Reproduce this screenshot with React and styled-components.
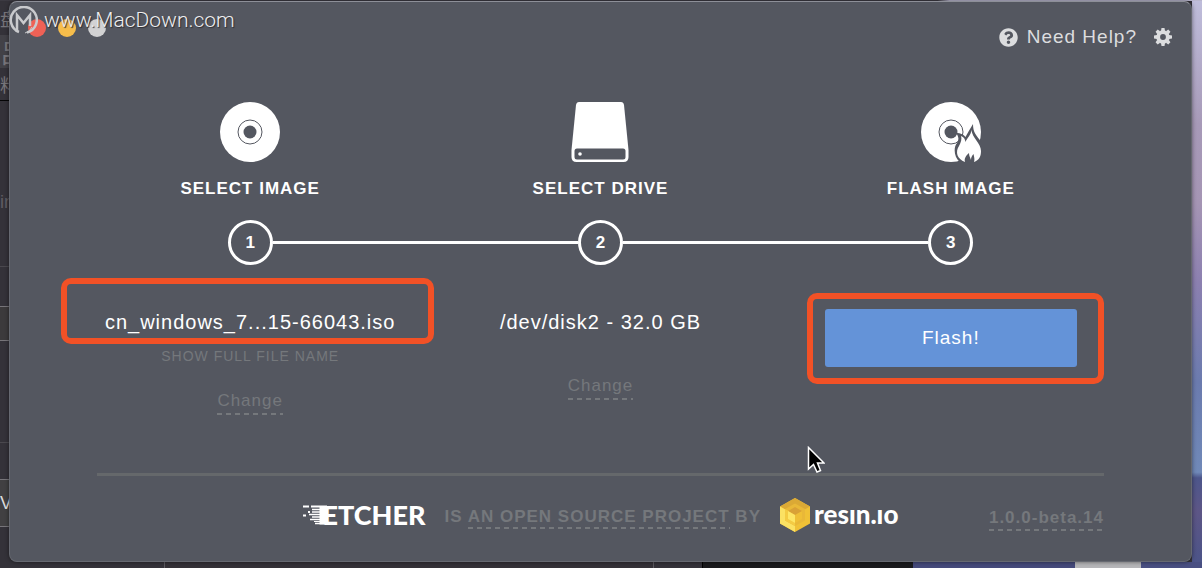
import React from 'react';
import styled, { createGlobalStyle } from 'styled-components';
import { FaQuestionCircle } from 'react-icons/fa';

const SLATE = '#545760';
const MUTED = '#75787c';
const ORANGE = '#f25126';

const GlobalStyle = createGlobalStyle`
  * {
    box-sizing: border-box;
  }
  body {
    margin: 0;
    background: #343239;
    font-family: "Liberation Sans", Arial, sans-serif;
    letter-spacing: 1px;
  }
  button {
    padding: 0;
    border: 0;
    background: none;
    color: inherit;
    font: inherit;
    letter-spacing: inherit;
    cursor: pointer;
  }
  a {
    color: inherit;
    text-decoration: none;
  }
  svg {
    display: block;
  }
`;

const Desktop = styled.div`
  display: grid;
  grid-template-columns: 9px minmax(0, 1fr) 10px;
  grid-template-rows: 1px minmax(0, 1fr) 6px;
  min-height: 100vh;
`;

const TopEdge = styled.div`
  grid-column: 1 / -1;
  background: linear-gradient(90deg, #3c3a42 78%, #b9b6ce 79%);
`;

const Behind = styled.div`
  display: flex;
  flex-direction: column;
  overflow: hidden;
  letter-spacing: 0;
  background: #343239;
`;

const BehindRow = styled.div`
  display: flex;
  align-items: center;
  flex: none;
  height: ${props => props.height}px;
  border-bottom: 1px solid ${props => props.line || 'transparent'};
  background: ${props => props.fill || 'transparent'};
  color: ${props => props.color || '#77757a'};
  font-family: "Liberation Sans", "Noto Sans CJK SC", sans-serif;
  font-size: ${props => props.size || 18}px;
  white-space: nowrap;
`;

const Wallpaper = styled.div`
  background: linear-gradient(
    #bfbddb 0%, #a79ab8 22%, #a595b4 36%, #8c80b0 50%,
    #6b7bae 68%, #7089b8 84%, #4d568b 85%, #5d5686 91%, #4c5488 100%
  );
`;

const Dock = styled.div`
  grid-column: 1 / -1;
  display: flex;
`;

const DockPiece = styled.div`
  flex: ${props => props.grow} 1 0;
  background: ${props => props.fill};
  border-right: 1px solid ${props => props.line || props.fill};
`;

const Window = styled.main`
  position: relative;
  display: flex;
  flex-direction: column;
  border: 1px solid #666971;
  border-top-color: #8d8f98;
  border-radius: 8px;
  background: ${SLATE};
  color: #fff;
  box-shadow: 0 0 4px rgba(0, 0, 0, 0.5);
`;

const Header = styled.header`
  display: flex;
  align-items: flex-start;
  justify-content: space-between;
  height: 100px;
  padding: 17px 19px 0 18px;
`;

const Lights = styled.div`
  display: flex;
  gap: 12px;
`;

const Light = styled.span`
  width: 18px;
  height: 18px;
  border-radius: 50%;
  background: ${props => props.fill};
`;

const HeaderActions = styled.div`
  display: flex;
  align-items: center;
  gap: 17px;
  padding-top: 6px;
  color: #dcdddf;
  font-size: 19px;
  line-height: 24px;
`;

const HelpLink = styled.a`
  display: flex;
  align-items: center;
  gap: 9px;
`;

const Watermark = styled.div`
  position: absolute;
  top: 2px;
  left: -1px;
  display: flex;
  align-items: center;
  gap: 6px;
  color: #eeeeef;
  font-family: Roboto, "Liberation Sans", sans-serif;
  font-size: 21px;
  font-weight: 300;
  line-height: 32px;
  letter-spacing: 0;
  text-shadow: 1px 1px 1px #2c2d31;
`;

const Steps = styled.div`
  display: grid;
  grid-template-columns: repeat(3, minmax(0, 1fr));
  padding: 0 65px;
`;

const Step = styled.section`
  display: flex;
  flex-direction: column;
  align-items: center;
`;

const StepTitle = styled.h2`
  margin: 16px 0 20px;
  font-size: 17px;
  font-weight: bold;
  line-height: 22px;
  text-transform: uppercase;
`;

const Track = styled.div`
  display: flex;
  align-items: center;
  align-self: stretch;
`;

const Line = styled.span`
  flex: 1;
  height: 3px;
  background: ${props => props.$blank ? 'transparent' : '#fff'};
`;

const Badge = styled.span`
  width: 45px;
  height: 45px;
  border: 3px solid #fff;
  border-radius: 50%;
  font-size: 17px;
  font-weight: bold;
  line-height: 39px;
  text-align: center;
  letter-spacing: 0;
`;

const Detail = styled.div`
  position: relative;
  display: flex;
  flex-direction: column;
  align-items: center;
  align-self: stretch;
  padding-top: 44px;
`;

const Selection = styled.div`
  font-size: 20px;
  line-height: 26px;
`;

const ShowName = styled.button`
  margin-top: 13px;
  color: ${MUTED};
  font-size: 14px;
  line-height: 16px;
  text-transform: uppercase;
`;

const dashes = `
  padding-bottom: 3px;
  background: repeating-linear-gradient(90deg, ${MUTED} 0 5px, transparent 5px 9px) left bottom / 100% 2px no-repeat;
`;

const ChangeButton = styled.button`
  && {
    margin-top: ${props => props.gap}px;
    color: ${MUTED};
    font-size: 17px;
    line-height: 22px;
    ${dashes}
  }
`;

const FlashButton = styled.button`
  && {
    width: 252px;
    height: 58px;
    border-radius: 3px;
    background: #6493d8;
    font-size: 19px;
  }
`;

const Highlight = styled.span`
  position: absolute;
  top: ${props => props.top}px;
  left: ${props => props.left}px;
  width: ${props => props.width}px;
  height: ${props => props.height}px;
  border: 6px solid ${ORANGE};
  border-radius: 10px;
  pointer-events: none;
`;

const Footer = styled.footer`
  display: grid;
  grid-template-columns: 1fr auto 1fr;
  align-items: center;
  height: 88px;
  margin: auto 87px 0;
  padding-bottom: 7px;
  border-top: 3px solid #65686b;
  color: ${MUTED};
  font-size: 17px;
  font-weight: bold;
  line-height: 20px;
`;

const Credits = styled.div`
  grid-column: 2;
  display: flex;
  align-items: center;
  gap: 19px;
`;

const Tagline = styled.span`
  padding-top: 4px;
`;

const DashedLink = styled.a`
  ${dashes}
`;

const Version = styled(DashedLink)`
  justify-self: end;
  padding-top: 8px;
`;

const Brand = styled.a`
  display: flex;
  align-items: flex-start;
  gap: ${props => props.gap}px;
  color: #fff;
  font-family: Lato, sans-serif;
  font-size: ${props => props.size}px;
  font-weight: 900;
  line-height: 32px;
  letter-spacing: 0;
`;

const Pointer = styled.svg`
  position: absolute;
  top: 444px;
  left: 797px;
`;

const DiscIcon = ({ flame }) => (
  <svg width="60" height="60" viewBox="0 0 60 60" aria-hidden="true">
    <circle cx="30" cy="30" r="30" fill="#fff" />
    <circle cx="30" cy="30" r="12" fill="none" stroke={SLATE} strokeWidth="1" />
    <circle cx="30" cy="30" r="6.5" fill={SLATE} />
    {flame && (
      <React.Fragment>
        <path
          d="M40 61C33 56 32 46 36 41C38 38 38 35 35 31C40 31 43 33 44.500 35C46 32 49 27 52 22C52 30 55 33 58 37L61 41V61Z"
          fill={SLATE}
        />
        <path
          d="M44 60C36 57 34 50 38 44C40 40 41 37 40 34C43 35 44 37 44.500 40C46 36 50 33 50.500 28C51 36 60 41 60 49C60 55 58 58 53 60C54 57 53 55 52.500 52C51 54 50 55 50 58C49 55 48 54 48 51C45 54 43 56 44 60Z"
          fill="#fff"
        />
      </React.Fragment>
    )}
  </svg>
);

const DriveIcon = () => (
  <svg width="60" height="60" viewBox="0 0 60 60" aria-hidden="true">
    <path
      d="M9 0H51Q53.500 0 54 3L58.500 48V55Q58.500 60 53.500 60H6.500Q1.500 60 1.500 55V48L6 3Q6.500 0 9 0Z"
      fill="#fff"
    />
    <rect x="4.500" y="46.500" width="51" height="11" rx="2.500" fill={SLATE} />
    <circle cx="10" cy="52" r="1.800" fill="#fff" />
  </svg>
);

const GearIcon = () => (
  <svg width="18" height="18" viewBox="0 0 18 18" aria-hidden="true">
    <circle cx="9" cy="9" r="4.800" fill="none" stroke="currentColor" strokeWidth="3.800" />
    {[0, 45, 90, 135, 180, 225, 270, 315].map(angle => (
      <path key={angle} d="M7 3L7.500 0H10.500L11 3Z" fill="currentColor" transform={`rotate(${angle} 9 9)`} />
    ))}
  </svg>
);

const SiteMark = () => (
  <svg width="29" height="29" viewBox="0 0 29 29" fill="none" stroke="#c9cacd" aria-hidden="true">
    <path d="M10 26A13 13 0 1 1 18 26.500" strokeWidth="2.500" />
    <path d="M8 26V9L14.500 17L21 9V20" strokeWidth="2.500" />
    <path d="M16 27Q21 26 23 21" strokeWidth="1" />
  </svg>
);

const Streaks = styled.svg`
  align-self: center;
  margin-right: -4px;
`;

const SpeedLines = () => (
  <Streaks width="24" height="20" viewBox="0 0 24 20" fill="none" stroke="#fff" aria-hidden="true">
    <path d="M0 1.500H6M8 1.500H24M0 10.500H3M5 7H7" strokeWidth="2" />
    <path d="M9 4.500H20M9 7H20M6 9.500H20M9 12H20M7 14.500H20M12 18.500H24" strokeWidth="1.700" />
    <path d="M20 1V19.500" strokeWidth="7" />
    <path d="M11 16.500H17" strokeWidth="1" />
  </Streaks>
);

const ResinCube = () => (
  <svg width="30" height="34" viewBox="0 0 30 34" aria-hidden="true">
    <path d="M15 0L30 8.500V25.500L15 34L0 25.500V8.500Z" fill="#f0c136" />
    <path d="M15 0L30 8.500L15 17L0 8.500Z" fill="#dba935" />
    <path d="M0 8.500L15 17V34L0 25.500Z" fill="#fbe163" />
    <path d="M15 5.500L25 11V22.500L15 28L5 22.500V11Z" fill="#e9b838" />
    <path d="M5 11L15 16.500V28L5 22.500Z" fill="#f4cb43" />
    <path d="M15 9L22 13V21L15 25L8 21V13Z" fill="#efbf36" />
    <path d="M15 9L22 13L15 17L8 13Z" fill="#d9a136" />
    <path d="M8 13L15 17V25L8 21Z" fill="#fde565" />
  </svg>
);

const steps = [
  { title: 'Select image', icon: <DiscIcon /> },
  { title: 'Select drive', icon: <DriveIcon /> },
  { title: 'Flash image', icon: <DiscIcon flame /> },
];

const details = [
  <React.Fragment>
    <Selection>cn_windows_7...15-66043.iso</Selection>
    <ShowName>Show full file name</ShowName>
    <ChangeButton gap={26}>Change</ChangeButton>
    <Highlight top={13} left={-14} width={373} height={66} />
  </React.Fragment>,
  <React.Fragment>
    <Selection>/dev/disk2 - 32.0 GB</Selection>
    <ChangeButton gap={40}>Change</ChangeButton>
  </React.Fragment>,
  <React.Fragment>
    <FlashButton>Flash!</FlashButton>
    <Highlight top={28} left={31} width={297} height={91} />
  </React.Fragment>,
];

export default function App() {
  return (
    <Desktop>
      <GlobalStyle />
      <TopEdge />
      <Behind aria-hidden="true">
        <BehindRow height={34}>盘</BehindRow>
        <BehindRow height={33} fill="#424147" size={26}>吕</BehindRow>
        <BehindRow height={33} line="#050506">料</BehindRow>
        <BehindRow height={81} />
        <BehindRow height={41} color="#5f5d63">in</BehindRow>
        <BehindRow height={44} line="#4a484e" />
        <BehindRow height={40} line="#77757a" />
        <BehindRow height={34} line="#77757a" fill="#3c3a3c" />
        <BehindRow height={102} line="#4a484e" />
        <BehindRow height={37} line="#77757a" />
        <BehindRow height={47} line="#77757a" fill="#414042" color="#dedede">Ve</BehindRow>
      </Behind>
      <Window>
        <Header>
          <Lights>
            <Light fill="#ee6156" />
            <Light fill="#f6bd4b" />
            <Light fill="#d2d2d3" />
          </Lights>
          <HeaderActions>
            <HelpLink href="#help">
              <FaQuestionCircle size={19} />
              Need Help?
            </HelpLink>
            <button aria-label="Settings"><GearIcon /></button>
          </HeaderActions>
        </Header>
        <Steps>
          {steps.map((step, i) => (
            <Step key={step.title}>
              {step.icon}
              <StepTitle>{step.title}</StepTitle>
              <Track>
                <Line $blank={i === 0} />
                <Badge>{i + 1}</Badge>
                <Line $blank={i === 2} />
              </Track>
              <Detail>{details[i]}</Detail>
            </Step>
          ))}
        </Steps>
        <Footer>
          <Credits>
            <Brand href="#etcher" gap={0} size={27}>
              <SpeedLines />
              ETCHER
            </Brand>
            <Tagline>
              IS <DashedLink href="#source">AN OPEN SOURCE PROJECT</DashedLink> BY
            </Tagline>
            <Brand href="#resin" gap={4} size={26} aria-label="resin.io">
              <ResinCube />
              resın.ıo
            </Brand>
          </Credits>
          <Version href="#version">1.0.0-beta.14</Version>
        </Footer>
        <Watermark>
          <SiteMark />
          www.MacDown.com
        </Watermark>
        <Pointer width="18" height="28" viewBox="0 0 18 28" aria-hidden="true">
          <path d="M1.500 1.500V23L6.500 18.500L10 26L13.500 24.500L10.500 17H17Z" fill="#000" stroke="#fff" strokeWidth="1.500" />
        </Pointer>
      </Window>
      <Wallpaper />
      <Dock>
        <DockPiece grow={165} fill="#343239" line="#5b595f" />
        <DockPiece grow={491} fill="#343137" line="#5b595f" />
        <DockPiece grow={48} fill="#343239" line="#000" />
        <DockPiece grow={210} fill="#1a1a1d" />
        <DockPiece grow={162} fill="#454a7b" />
        <DockPiece grow={66} fill="#b6b6b9" />
        <DockPiece grow={60} fill="#494f82" />
      </Dock>
    </Desktop>
  );
}
